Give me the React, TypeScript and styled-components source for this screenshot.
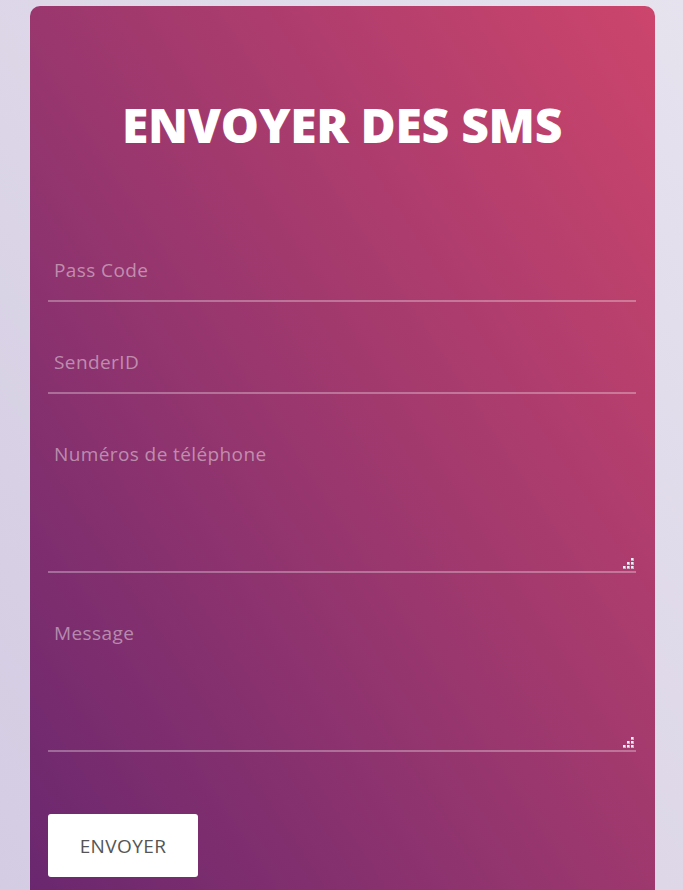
import React from "react";
import styled, { createGlobalStyle } from "styled-components";

const Global = createGlobalStyle`
  html, body { margin: 0; padding: 0; }
  body {
    min-height: 890px;
    background: linear-gradient(to top right, #d3cbe2, #e6e2ee);
    font-family: "Open Sans", "Liberation Sans", sans-serif;
    overflow: hidden;
  }
  * { box-sizing: border-box; }
`;

const Page = styled.div`
  display: flex;
  justify-content: center;
  padding: 6px 28px 0 30px;
`;

const Card = styled.form`
  width: 625px;
  height: 960px;
  border-radius: 10px;
  background: linear-gradient(to top right, #66266f 0%, #9a376e 50%, #cc456c 100%);
  padding: 0 19px 0 18px;
  display: flex;
  flex-direction: column;
`;

const Title = styled.h1`
  margin: 0;
  padding: 86px 0 0;
  height: 234px;
  text-align: center;
  color: #fff;
  font-family: "Open Sans", sans-serif;
  font-weight: 800;
  font-size: 48px;
  line-height: 66px;
  letter-spacing: -0.3px;
`;

const Fields = styled.div`
  display: flex;
  flex-direction: column;
  gap: 30px;
`;

const Field = styled.input`
  display: block;
  width: 100%;
  height: 62px;
  margin: 0;
  padding: 0 6px;
  background: transparent;
  border: none;
  border-bottom: 2px solid rgba(255, 255, 255, 0.3);
  outline: none;
  color: #fff;
  font-family: "Open Sans", sans-serif;
  font-size: 19px;
  letter-spacing: 0.4px;
  &::placeholder { color: rgba(255, 255, 255, 0.45); }
`;

const AreaWrap = styled.div`
  position: relative;
`;

const Area = styled.textarea`
  display: block;
  width: 100%;
  height: 149px;
  margin: 0;
  padding: 17px 6px 0;
  background: transparent;
  border: none;
  border-bottom: 2px solid rgba(255, 255, 255, 0.3);
  outline: none;
  color: #fff;
  resize: none;
  font-family: "Open Sans", sans-serif;
  font-size: 19px;
  letter-spacing: 0.4px;
  line-height: 26px;
  &::placeholder { color: rgba(255, 255, 255, 0.45); }
`;

const Grip = styled.svg`
  position: absolute;
  right: 2px;
  bottom: 4px;
  width: 11px;
  height: 11px;
  pointer-events: none;
`;

const ButtonRow = styled.div`
  margin-top: 62px;
`;

const Button = styled.button`
  width: 150px;
  height: 63px;
  border: none;
  border-radius: 3px;
  background: #fff;
  color: #555;
  font-family: "Open Sans", sans-serif;
  font-size: 19px;
  letter-spacing: 0.4px;
  cursor: pointer;
`;

const gripSquares: Array<[number, number]> = [
  [8, 0],
  [4, 4],
  [8, 4],
  [0, 8],
  [4, 8],
  [8, 8],
];

function ResizeGrip() {
  return (
    <Grip viewBox="0 0 11 11" aria-hidden="true">
      {gripSquares.map(([x, y]) => (
        <g key={`${x}-${y}`}>
          <rect x={x} y={y} width={3} height={3} fill="#bdb6c4" />
          <rect x={x} y={y} width={2} height={2} fill="#f4f2f6" />
        </g>
      ))}
    </Grip>
  );
}

export default function App() {
  return (
    <>
      <Global />
      <Page>
        <Card onSubmit={(e) => e.preventDefault()}>
          <Title>ENVOYER DES SMS</Title>
          <Fields>
            <Field placeholder="Pass Code" />
            <Field placeholder="SenderID" />
            <AreaWrap>
              <Area placeholder="Numéros de téléphone" />
              <ResizeGrip />
            </AreaWrap>
            <AreaWrap>
              <Area placeholder="Message" />
              <ResizeGrip />
            </AreaWrap>
          </Fields>
          <ButtonRow>
            <Button type="submit">ENVOYER</Button>
          </ButtonRow>
        </Card>
      </Page>
    </>
  );
}
